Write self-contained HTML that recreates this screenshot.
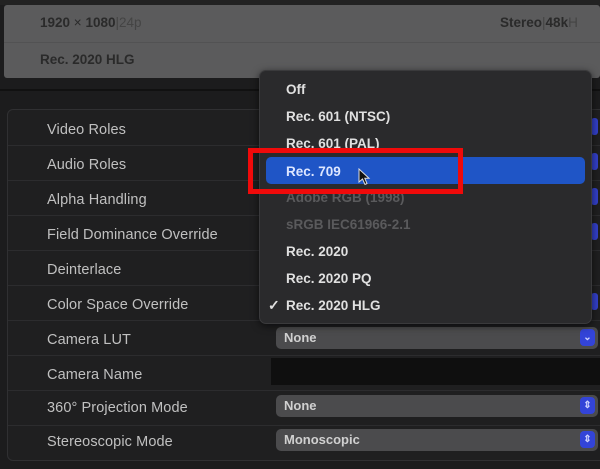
<!DOCTYPE html><html><head><style>
body{margin:0;width:600px;height:469px;background:#1c1c1d;overflow:hidden;position:relative;font-family:"Liberation Sans",sans-serif;font-weight:bold;-webkit-font-smoothing:antialiased}
div{position:absolute;box-sizing:border-box}
.t{font-size:13.5px;color:#2a2a2a}
.lbl{left:47px;font-size:14.5px;color:#c0c0c0;font-weight:normal;letter-spacing:0.1px}
.sep{left:8px;width:592px;height:1px;background:#2c2c2e}
.dd{left:276px;width:322px;height:22px;border-radius:5px;background:#4b4b4d;color:#d0d0d0;font-size:13px;padding:3px 0 0 8px}
.btn{right:3px;width:15px;height:17px;top:2px;border-radius:4px;background:#3344d8;color:#cfd3ff;font-size:10px;text-align:center;line-height:17px}
.sl{left:591px;width:7px;height:17px;border-radius:3px;background:#3340c8}
.mi{left:286px;font-size:13.5px;color:#e0e0e0}
</style></head><body>
<div style="left:0;top:0;width:600px;height:5px;background:#222"></div>
<div style="left:4px;top:5px;width:596px;height:73px;background:#5b5b5c;border-radius:3px"></div>
<div style="left:4px;top:42px;width:596px;height:1px;background:#525253"></div>
<div class="t" style="left:40px;top:15px">1920<span style="font-weight:normal"> × </span>1080<span style="font-weight:normal;color:#444">|24p</span></div>
<div class="t" style="left:500px;top:15px">Stereo<span style="font-weight:normal;color:#444">|</span>48k<span style="font-weight:normal;color:#444">H</span></div>
<div class="t" style="left:40px;top:52px">Rec. 2020 HLG</div>
<div style="left:0;top:89px;width:600px;height:2px;background:#111"></div>
<div style="left:7px;top:109px;width:600px;height:352px;border:1px solid #303032;border-radius:6px;background:#1f1f20"></div>
<div class="sep" style="top:145px"></div><div class="sep" style="top:180px"></div><div class="sep" style="top:215px"></div><div class="sep" style="top:250px"></div><div class="sep" style="top:285px"></div><div class="sep" style="top:320px"></div><div class="sep" style="top:355px"></div><div class="sep" style="top:390px"></div><div class="sep" style="top:425px"></div>
<div class="lbl" style="top:122px">Video Roles</div>
<div class="lbl" style="top:157px">Audio Roles</div>
<div class="lbl" style="top:192px">Alpha Handling</div>
<div class="lbl" style="top:227px">Field Dominance Override</div>
<div class="lbl" style="top:262px">Deinterlace</div>
<div class="lbl" style="top:297px">Color Space Override</div>
<div class="lbl" style="top:332px">Camera LUT</div>
<div class="lbl" style="top:367px">Camera Name</div>
<div class="lbl" style="top:400px">360° Projection Mode</div>
<div class="lbl" style="top:434px">Stereoscopic Mode</div>
<div class="sl" style="top:118px"></div><div class="sl" style="top:153px"></div><div class="sl" style="top:188px"></div><div class="sl" style="top:223px"></div><div class="sl" style="top:293px"></div>
<div class="dd" style="top:327px">None<div class="btn">⌄</div></div>
<div style="left:271px;top:358px;width:329px;height:27px;background:#0f0f0f"></div>
<div class="dd" style="top:395px">None<div class="btn">⇕</div></div>
<div class="dd" style="top:429px">Monoscopic<div class="btn">⇕</div></div>
<div style="left:259px;top:70px;width:333px;height:254px;background:#2a2a2c;border:1px solid #3a3a3c;border-radius:7px;box-shadow:0 2px 8px rgba(0,0,0,.6)"></div>
<div style="left:266px;top:157px;width:319px;height:27px;background:#1f55c6;border-radius:5px"></div>
<div class="mi" style="top:82px">Off</div>
<div class="mi" style="top:109px">Rec. 601 (NTSC)</div>
<div class="mi" style="top:136px">Rec. 601 (PAL)</div>
<div class="mi" style="top:164px;color:#dde6ff">Rec. 709</div>
<div class="mi" style="top:190px;color:#5a5a5c">Adobe RGB (1998)</div>
<div class="mi" style="top:217px;color:#5a5a5c">sRGB IEC61966-2.1</div>
<div class="mi" style="top:244px">Rec. 2020</div>
<div class="mi" style="top:271px">Rec. 2020 PQ</div>
<div class="mi" style="top:298px">Rec. 2020 HLG</div>
<div style="left:268px;top:297px;color:#e0e0e0;font-size:14px">✓</div>
<div style="left:248px;top:148px;width:215px;height:46px;border:5px solid #f00a0a"></div>
<svg style="position:absolute;left:358px;top:168px" width="14" height="18" viewBox="0 0 14 18"><path d="M1 1 L1 14 L4.5 11 L7 16.5 L9 15.5 L6.8 10.3 L11 10.3 Z" fill="#111" stroke="#ddd" stroke-width="1"/></svg>
</body></html>
